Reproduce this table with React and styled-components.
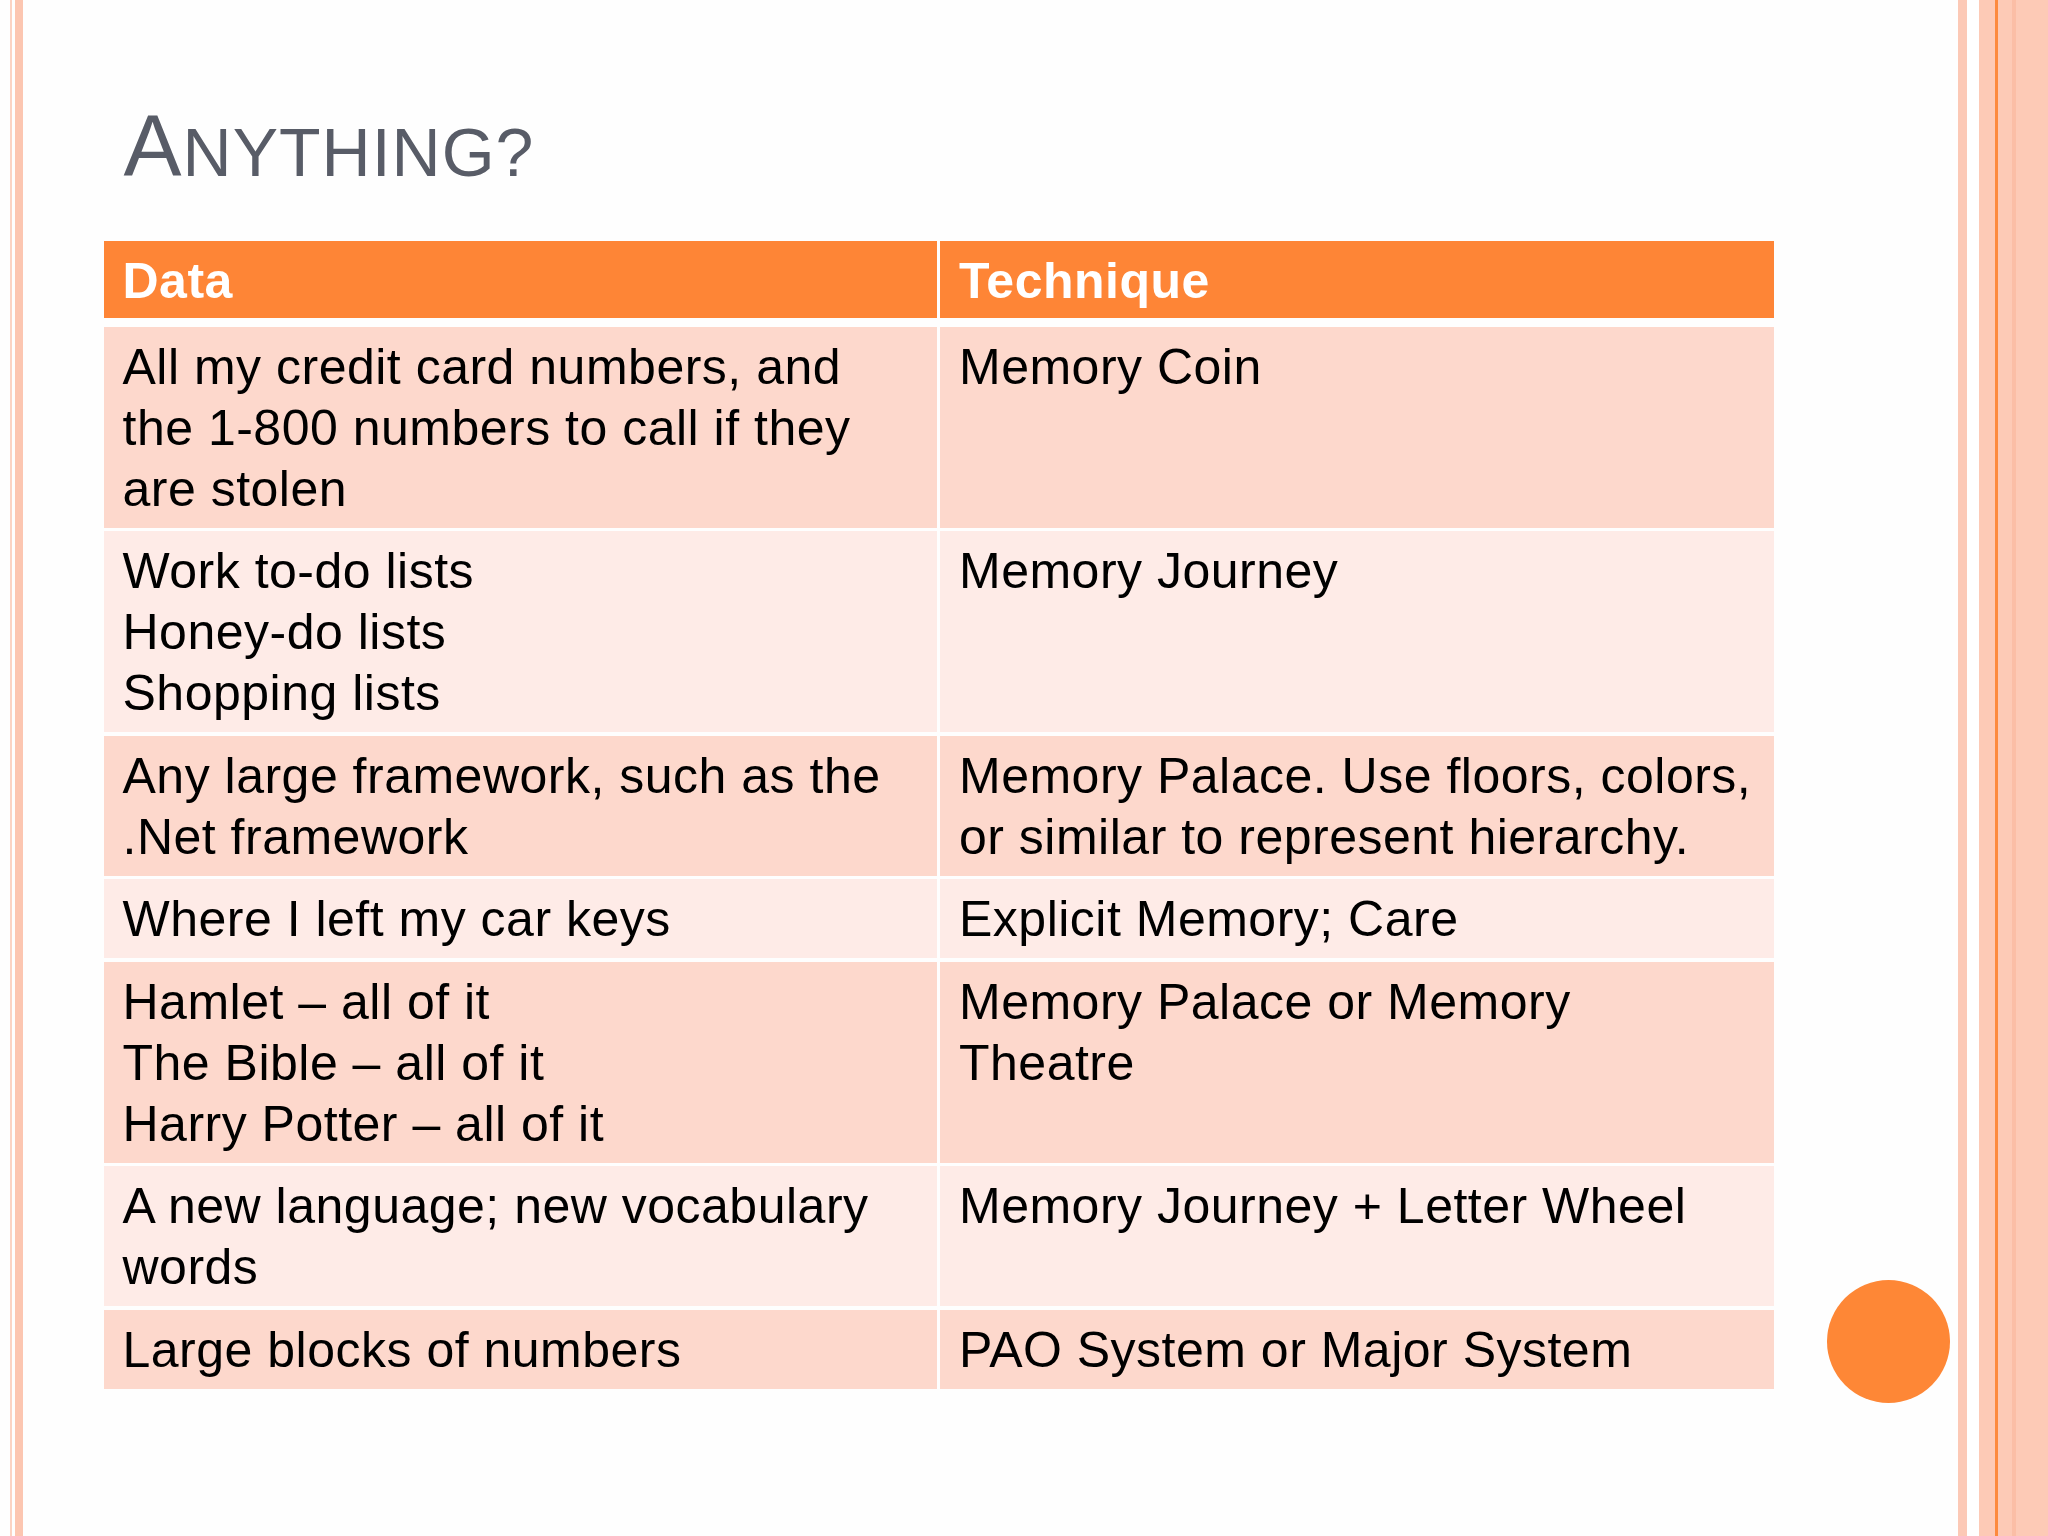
import React from 'react';
import styled, { createGlobalStyle } from 'styled-components';

const GlobalStyle = createGlobalStyle`
  html, body {
    margin: 0;
    padding: 0;
    background: #fefefe;
  }
  body {
    font-family: "Liberation Sans", Arial, sans-serif;
  }
`;

// Slide with its peach side stripes painted as background bands
const Slide = styled.div`
  width: 2048px;
  height: 1536px;
  overflow: hidden;
  display: flex;
  background:
    linear-gradient(to right,
      transparent 0, transparent 10px,
      #fbd3c3 10px, #fbd3c3 12.5px,
      transparent 12.5px, transparent 15.5px,
      #fcc6b1 15.5px, #fcc6b1 23.5px,
      transparent 23.5px),
    linear-gradient(to right,
      transparent 0, transparent 1958px,
      #fcc9b6 1958px, #fcc9b6 1967px,
      #ffffff 1967px, #ffffff 1979px,
      #fdcab6 1979px, #fdcab6 1995px,
      #fd8a3e 1995px, #fd8a3e 1998px,
      #fdcab6 1998px, #fdcab6 2012px,
      #fbbea6 2012px, #fbbea6 2016px,
      #fdcab6 2016px),
    #fefefe;
`;

const Content = styled.div`
  margin-left: 103.5px;
  width: 1670px;
  display: flex;
  flex-direction: column;
`;

const Title = styled.h1`
  margin: 96px 0 39px 20px;
  font-weight: 400;
  font-size: 87px;
  line-height: 100px;
  letter-spacing: 1px;
  color: #585c67;
  white-space: nowrap;
`;

const SmallCaps = styled.span`
  font-size: 68px;
`;

const Table = styled.div`
  display: flex;
  flex-direction: column;
  gap: 3.5px;
`;

const Row = styled.div`
  display: grid;
  grid-template-columns: 1fr 1fr;
  column-gap: 3px;
  margin-bottom: ${p => (p.$head ? '5px' : '0')};
`;

const Cell = styled.div`
  padding: ${p => (p.$head ? '10px 19px 6px' : '10px 19px 8px')};
  background: ${p => (p.$head ? '#fe8536' : p.$shade === 'dark' ? '#fdd8cc' : '#feebe7')};
  color: ${p => (p.$head ? '#ffffff' : '#000000')};
  font-weight: ${p => (p.$head ? 700 : 400)};
  font-size: 50px;
  line-height: 61px;
  letter-spacing: 0.5px;
`;

const Line = styled.div`
  white-space: nowrap;
`;

const Dot = styled.div`
  flex: none;
  width: 123px;
  height: 123px;
  margin: 1280px 0 0 53.5px;
  border-radius: 50%;
  background: #fe8736;
`;

const rows = [
  {
    data: ['All my credit card numbers, and', 'the 1-800 numbers to call if they', 'are stolen'],
    tech: ['Memory Coin'],
  },
  {
    data: ['Work to-do lists', 'Honey-do lists', 'Shopping lists'],
    tech: ['Memory Journey'],
  },
  {
    data: ['Any large framework, such as the', '.Net framework'],
    tech: ['Memory Palace. Use floors, colors,', 'or similar to represent hierarchy.'],
  },
  {
    data: ['Where I left my car keys'],
    tech: ['Explicit Memory; Care'],
  },
  {
    data: ['Hamlet \u2013 all of it', 'The Bible \u2013 all of it', 'Harry Potter \u2013 all of it'],
    tech: ['Memory Palace or Memory', 'Theatre'],
  },
  {
    data: ['A new language; new vocabulary', 'words'],
    tech: ['Memory Journey + Letter Wheel'],
  },
  {
    data: ['Large blocks of numbers'],
    tech: ['PAO System or Major System'],
  },
];

const Lines = ({ items }) => items.map((t, i) => <Line key={i}>{t}</Line>);

export default function App() {
  return (
    <>
      <GlobalStyle />
      <Slide>
        <Content>
          <Title>
            A<SmallCaps>NYTHING?</SmallCaps>
          </Title>
          <Table>
            <Row $head>
              <Cell $head>Data</Cell>
              <Cell $head>Technique</Cell>
            </Row>
            {rows.map((r, i) => {
              const shade = i % 2 === 0 ? 'dark' : 'light';
              return (
                <Row key={i}>
                  <Cell $shade={shade}><Lines items={r.data} /></Cell>
                  <Cell $shade={shade}><Lines items={r.tech} /></Cell>
                </Row>
              );
            })}
          </Table>
        </Content>
        <Dot />
      </Slide>
    </>
  );
}
